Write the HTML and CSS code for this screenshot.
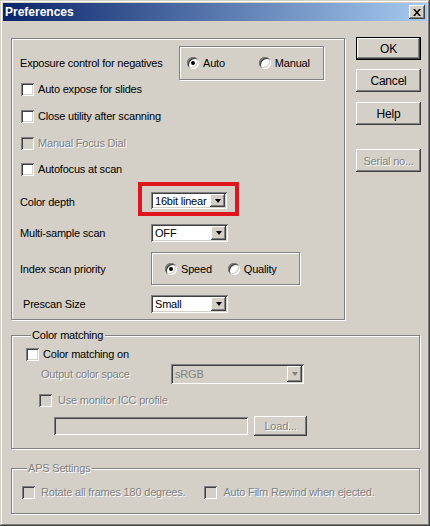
FILE: index.html
```html
<!DOCTYPE html>
<html lang="en">
<head>
    <meta charset="UTF-8" />
    <title>Preferences</title>
    <link rel="stylesheet" href="styles.css">
</head>
<body>
    <div class="window">
        <div class="titlebar">
            <span class="title">Preferences</span>
            <span class="close">
                <svg width="8" height="7" viewBox="0 0 8 7"><path d="M0 0h2l2 2.5L6 0h2L5 3.5 8 7H6L4 4.5 2 7H0l3-3.5z" fill="#000"/></svg>
            </span>
        </div>

        <div class="content">
            <div class="top">
                <div class="box main">
                    <div class="row row-exposure">
                        <span class="label label-wide">Exposure control for negatives</span>
                        <div class="box radios radios-exposure">
                            <span class="radio checked"></span><span class="radio-text">Auto</span>
                            <span class="radio radio-manual"></span><span class="radio-text">Manual</span>
                        </div>
                    </div>
                    <div class="row row-check">
                        <span class="check"></span><span class="check-text">Auto expose for slides</span>
                    </div>
                    <div class="row row-check gap9">
                        <span class="check"></span><span class="check-text">Close utility after scanning</span>
                    </div>
                    <div class="row row-check gap9 disabled">
                        <span class="check"></span><span class="check-text">Manual Focus Dial</span>
                    </div>
                    <div class="row row-check gap8">
                        <span class="check"></span><span class="check-text">Autofocus at scan</span>
                    </div>
                    <div class="row row-depth">
                        <span class="label label-depth">Color depth</span>
                        <div class="highlight">
                            <div class="select">
                                <span class="value">16bit linear</span><span class="arrow"></span>
                            </div>
                        </div>
                    </div>
                    <div class="row row-line gap9">
                        <span class="label">Multi-sample scan</span>
                        <div class="select">
                            <span class="value">OFF</span><span class="arrow"></span>
                        </div>
                    </div>
                    <div class="row row-index">
                        <span class="label">Index scan priority</span>
                        <div class="box radios radios-index">
                            <span class="radio checked"></span><span class="radio-text">Speed</span>
                            <span class="radio radio-quality"></span><span class="radio-text">Quality</span>
                        </div>
                    </div>
                    <div class="row row-line gap10">
                        <span class="label label-prescan">Prescan Size</span>
                        <div class="select">
                            <span class="value">Small</span><span class="arrow"></span>
                        </div>
                    </div>
                </div>

                <div class="buttons">
                    <span class="btn btn-default">OK</span>
                    <span class="btn btn-cancel">Cancel</span>
                    <span class="btn btn-help">Help</span>
                    <span class="btn btn-serial disabled-text">Serial no...</span>
                </div>
            </div>

            <div class="box group group-color">
                <span class="group-title">Color matching</span>
                <div class="row row-check cm-on">
                    <span class="check"></span><span class="check-text">Color matching on</span>
                </div>
                <div class="row row-output disabled">
                    <span class="label label-output">Output color space</span>
                    <div class="select select-wide">
                        <span class="value">sRGB</span><span class="arrow"></span>
                    </div>
                </div>
                <div class="row row-check cm-icc disabled">
                    <span class="check"></span><span class="check-text icc-text">Use monitor ICC profile</span>
                </div>
                <div class="row row-file">
                    <span class="field"></span>
                    <span class="btn btn-load disabled-text">Load...</span>
                </div>
            </div>

            <div class="box group group-aps">
                <span class="group-title disabled-text">APS Settings</span>
                <div class="row row-check aps-row disabled">
                    <span class="check"></span><span class="check-text aps-text">Rotate all frames 180 degrees.</span>
                    <span class="check aps-second"></span><span class="check-text aps-text">Auto Film Rewind when ejected.</span>
                </div>
            </div>
        </div>
    </div>
</body>
</html>
```

FILE: styles.css
```css
* {
    box-sizing: border-box;
}

body {
    margin: 0;
    background: #d4d0c8;
    font-family: "Liberation Sans", Arial, sans-serif;
    font-size: 11px;
    letter-spacing: -0.2px;
    color: #000;
}

.window {
    width: 430px;
    height: 526px;
    padding: 3px;
    background: #d4d0c8;
    box-shadow: inset -1px -1px #404040, inset 1px 1px #d4d0c8, inset -2px -2px #808080, inset 2px 2px #fff;
}

.titlebar {
    height: 18px;
    display: flex;
    align-items: center;
    justify-content: space-between;
    padding: 0 2px;
    background: linear-gradient(to right, #0a246a, #a6caf0);
}

.title {
    color: #fff;
    font-weight: bold;
    font-size: 12px;
    letter-spacing: 0;
}

.close {
    width: 16px;
    height: 14px;
    display: flex;
    align-items: center;
    justify-content: center;
    background: #d4d0c8;
    box-shadow: inset -1px -1px #404040, inset 1px 1px #fff, inset -2px -2px #808080;
}

.content {
    padding: 17px 0 0 8px;
}

.top {
    display: flex;
    gap: 11px;
}

/* etched group frame */
.box {
    border: 1px solid #808080;
    box-shadow: inset 1px 1px #fff, 1px 1px #fff;
}

.main {
    width: 334px;
    height: 282px;
    padding: 0 0 0 8px;
}

.row {
    display: flex;
    align-items: center;
}

.row-exposure {
    height: 34px;
    margin-top: 7px;
}

.row-check {
    height: 18px;
}

.gap8 {
    margin-top: 8px;
}

.gap9 {
    margin-top: 9px;
}

.gap10 {
    margin-top: 10px;
}

.row-line {
    height: 18px;
}

.row-depth {
    height: 33px;
    margin-top: 4px;
    align-items: flex-start;
}

.row-index {
    height: 33px;
    margin-top: 10px;
}

.label {
    width: 131px;
    flex: none;
}

.label-wide {
    width: 159px;
}

.label-depth {
    width: 118px;
    margin-top: 14px;
}

.label-prescan {
    margin-left: 3px;
    width: 128px;
}

.check {
    width: 13px;
    height: 13px;
    flex: none;
    margin-left: 1px;
    background: #fff;
    box-shadow: inset 1px 1px #808080, inset -1px -1px #fff, inset 2px 2px #404040, inset -2px -2px #d4d0c8;
}

.check-text {
    margin-left: 4px;
}

.disabled .check {
    background: #d4d0c8;
}

.disabled .check-text,
.disabled .label,
.disabled-text {
    color: #808080;
    text-shadow: 1px 1px #fff;
}

.radios {
    height: 34px;
    display: flex;
    align-items: center;
}

.radios-exposure {
    width: 145px;
    padding-left: 7px;
}

.radios-index {
    width: 149px;
    height: 33px;
    padding-left: 13px;
}

.radio {
    width: 12px;
    height: 12px;
    flex: none;
    border-radius: 50%;
    background: #fff;
    box-shadow: inset 1px 1px #808080, inset -1px -1px #fff, inset 2px 2px #404040, inset -2px -2px #d4d0c8;
    display: flex;
    align-items: center;
    justify-content: center;
}

.radio.checked::after {
    content: "";
    width: 4px;
    height: 4px;
    border-radius: 50%;
    background: #000;
}

.radio-text {
    margin-left: 4px;
}

.radio-manual {
    margin-left: 34px;
}

.radio-quality {
    margin-left: 16px;
}

.highlight {
    border: 4px solid #e0141c;
    padding: 6px 8px 3px 9px;
}

.select {
    width: 77px;
    height: 18px;
    padding: 2px;
    display: flex;
    background: #fff;
    box-shadow: inset 1px 1px #808080, inset -1px -1px #fff, inset 2px 2px #404040, inset -2px -2px #d4d0c8;
}

.highlight .select {
    width: 76px;
    height: 17px;
}

.value {
    flex: 1;
    padding-left: 2px;
    line-height: 14px;
}

.arrow {
    width: 15px;
    flex: none;
    display: flex;
    align-items: center;
    justify-content: center;
    background: #d4d0c8;
    box-shadow: inset -1px -1px #404040, inset 1px 1px #fff, inset -2px -2px #808080;
}

.arrow::after {
    content: "";
    border-left: 3.5px solid transparent;
    border-right: 3.5px solid transparent;
    border-top: 4px solid #000;
}

.disabled .select {
    background: #d4d0c8;
}

.disabled .arrow::after {
    border-top-color: #808080;
}

.disabled .value {
    color: #808080;
}

.buttons {
    display: flex;
    flex-direction: column;
    margin-top: -1px;
}

.btn {
    width: 65px;
    height: 23px;
    display: flex;
    align-items: center;
    justify-content: center;
    font-size: 12px;
    background: #d4d0c8;
    box-shadow: inset -1px -1px #404040, inset 1px 1px #fff, inset -2px -2px #808080;
}

.btn-default {
    border: 1px solid #000;
}

.btn-cancel {
    margin-top: 9px;
}

.btn-help {
    margin-top: 10px;
}

.btn-serial {
    margin-top: 24px;
    font-size: 11px;
}

.group {
    width: 409px;
}

.group-title {
    display: inline-block;
    margin: -8px 0 0 6px;
    padding: 0 2px 0 1px;
    background: #d4d0c8;
    vertical-align: top;
    line-height: 14px;
}

.group-color {
    height: 114px;
    margin-top: 15px;
    padding-left: 13px;
}

.cm-on {
    margin-top: -3px;
}

.row-output {
    height: 20px;
    margin-top: 1px;
}

.label-output {
    margin-left: 16px;
    width: 130px;
}

.select-wide {
    width: 133px;
    height: 20px;
}

.select-wide .value {
    line-height: 16px;
}

.cm-icc {
    margin-top: 7px;
}

.cm-icc .check {
    margin-left: 14px;
}

.icc-text {
    margin-left: 6px;
}

.row-file {
    margin-top: 7px;
    height: 20px;
}

.field {
    width: 194px;
    height: 18px;
    margin-left: 29px;
    background: #d4d0c8;
    box-shadow: inset 1px 1px #808080, inset -1px -1px #fff, inset 2px 2px #404040, inset -2px -2px #d4d0c8;
}

.btn-load {
    width: 53px;
    height: 20px;
    margin-left: 6px;
    font-size: 11px;
}

.group-aps {
    height: 46px;
    margin-top: 19px;
    padding-left: 9px;
}

.aps-row {
    margin-top: 2px;
}

.aps-text {
    margin-left: 6px;
}

.aps-second {
    margin-left: 19px;
}
```
